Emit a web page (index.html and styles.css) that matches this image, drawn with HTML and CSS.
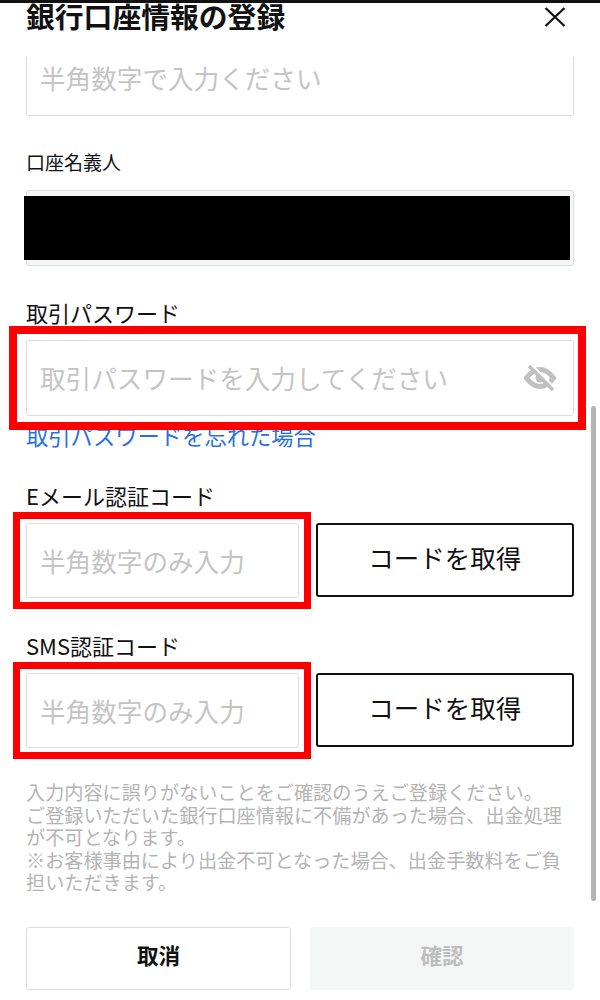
FILE: index.html
```html
<!DOCTYPE html>
<html lang="ja">
<head>
  <meta charset="utf-8">
  <title>銀行口座情報の登録</title>
  <link rel="stylesheet" href="styles.css">
</head>
<body>

  <div class="modal">
    <div class="header">
      <div class="title">銀行口座情報の登録</div>
      <svg class="close" width="22" height="20" viewBox="0 0 22 20">
        <path d="M1.5 1 L20.5 19 M20.5 1 L1.5 19" fill="none" stroke="#111" stroke-width="2.2"/>
      </svg>
    </div>

    <div class="body">
      <div class="input input-first"><span class="placeholder">半角数字で入力ください</span></div>

      <div class="field">
        <div class="label label-small">口座名義人</div>
        <div class="input input-filled"><div class="masked"></div></div>
      </div>

      <div class="field">
        <div class="label">取引パスワード</div>
        <div class="input">
          <span class="placeholder">取引パスワードを入力してください</span>
          <svg class="eye" width="32" height="26" viewBox="0 0 32 26">
            <path d="M2.5 13 C8 5.5 12 4.5 16 4.5 C20 4.5 24 5.5 29.5 13 C24 20.5 20 21.5 16 21.5 C12 21.5 8 20.5 2.5 13 Z" fill="none" stroke="#c0c0c0" stroke-width="5"/>
            <circle cx="16" cy="13" r="4.5" fill="#c0c0c0"/>
            <path d="M8 0 L31 23" stroke="#fff" stroke-width="2"/>
            <path d="M5 1 L29 25" stroke="#c0c0c0" stroke-width="3.5"/>
          </svg>
          <div class="mark mark-wide"></div>
        </div>
        <a class="forgot" href="#">取引パスワードを忘れた場合</a>
      </div>

      <div class="field field-after-link">
        <div class="label">Eメール認証コード</div>
        <div class="code-row">
          <div class="input">
            <span class="placeholder">半角数字のみ入力</span>
            <div class="mark mark-code"></div>
          </div>
          <button class="btn-code">コードを取得</button>
        </div>
      </div>

      <div class="field">
        <div class="label">SMS認証コード</div>
        <div class="code-row">
          <div class="input">
            <span class="placeholder">半角数字のみ入力</span>
            <div class="mark mark-code"></div>
          </div>
          <button class="btn-code">コードを取得</button>
        </div>
      </div>

      <p class="note">入力内容に誤りがないことをご確認のうえご登録ください。<br>ご登録いただいた銀行口座情報に不備があった場合、出金処理が不可となります。<br>※お客様事由により出金不可となった場合、出金手数料をご負担いただきます。</p>

      <div class="actions">
        <button class="btn-cancel">取消</button>
        <button class="btn-confirm">確認</button>
      </div>
    </div>

    <div class="scrollbar"></div>
  </div>

</body>
</html>
```

FILE: styles.css
```css
body {
  margin: 0;
  background: #fff;
}
.modal {
  position: relative;
  width: 600px;
  height: 1000px;
  overflow: hidden;
  background: #fff;
  color: #111;
  font-family: "Noto Sans CJK JP", "Noto Sans", sans-serif;
}
.header {
  display: flex;
  justify-content: space-between;
  align-items: flex-start;
  height: 54px;
  padding: 0 34px 0 26px;
  border-top: 3px solid #111;
  overflow: hidden;
}
.title {
  margin-top: -6px;
  font-size: 28.8px;
  font-weight: 700;
  line-height: 38px;
}
.close {
  margin-top: 4px;
}
.body {
  height: 943px;
  padding: 0 26px;
  overflow: hidden;
}
.field {
  margin-top: 34.5px;
}
.field-after-link {
  margin-top: 36px;
}
.label {
  height: 24px;
  margin-bottom: 16px;
  font-size: 22px;
  line-height: 24px;
  white-space: nowrap;
}
.label-small {
  font-size: 19px;
}
.input {
  position: relative;
  display: flex;
  align-items: center;
  justify-content: space-between;
  box-sizing: border-box;
  height: 75.5px;
  padding: 0 17px 0 13px;
  border: 1px solid #dcdddd;
  border-radius: 3px;
  background: #fff;
}
.input-first {
  margin-top: -17px;
}
.input-filled {
  background: #f5f6f6;
}
.placeholder {
  font-size: 25.6px;
  color: #c4c4c4;
  white-space: nowrap;
}
.masked {
  position: absolute;
  top: 5px;
  bottom: 5px;
  left: -3px;
  right: 3px;
  background: #000;
}
.mark {
  position: absolute;
  border: 8px solid #f00;
}
.mark-wide {
  top: -15px;
  bottom: -15.5px;
  left: -18px;
  right: -13px;
}
.mark-code {
  top: -12px;
  bottom: -12px;
  left: -14px;
  right: -13px;
  border-width: 7px;
}
.forgot {
  display: block;
  margin-top: 7px;
  font-size: 22.3px;
  line-height: 24px;
  color: #2a6fe0;
  text-decoration: none;
}
.code-row {
  display: grid;
  grid-template-columns: 272.5px 258.5px;
  justify-content: space-between;
}
.btn-code {
  height: 74.5px;
  padding: 0 0 6px;
  border: 2px solid #111;
  border-radius: 3px;
  background: #fff;
  color: #111;
  font-family: inherit;
  font-size: 25.5px;
}
.note {
  margin: 33px 0 0;
  font-size: 19.15px;
  line-height: 22.5px;
  color: #b4b4b4;
}
.actions {
  display: grid;
  grid-template-columns: 265px 264px;
  justify-content: space-between;
  margin-top: 33px;
}
.actions button {
  height: 63px;
  padding: 0 0 8px;
  border-radius: 3px;
  font-family: inherit;
  font-size: 21.6px;
  font-weight: 700;
}
.btn-cancel {
  border: 1px solid #dcdddd;
  background: #fff;
  color: #111;
}
.btn-confirm {
  border: none;
  background: #f5f6f6;
  color: #bdbdbd;
}
.scrollbar {
  position: absolute;
  top: 406px;
  right: 4px;
  width: 5px;
  height: 495px;
  border-radius: 3px;
  background: #b4b4b4;
}
```
